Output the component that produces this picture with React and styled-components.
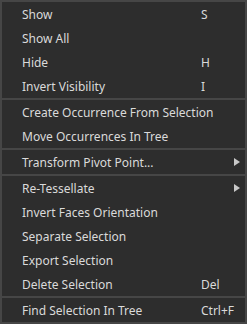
import React from 'react';
import styled, { createGlobalStyle } from 'styled-components';

const GlobalStyle = createGlobalStyle`
  html, body {
    margin: 0;
    padding: 0;
    background: #2b2b2b;
  }
`;

const Menu = styled.div`
  width: 247px;
  height: 324px;
  box-sizing: border-box;
  border: 2px solid #464646;
  background-color: #2d2d2d;
  display: flex;
  flex-direction: column;
  font-family: "Noto Sans", "Open Sans", sans-serif;
  font-size: 12px;
  color: #dadada;
`;

const Item = styled.div`
  height: 24px;
  display: flex;
  align-items: center;
  padding-left: 20px;
  padding-right: 5px;
  white-space: nowrap;
`;

const Label = styled.span`
  flex: 1;
`;

const Shortcut = styled.span`
  width: 39px;
`;

const Separator = styled.div`
  height: 2px;
  background-color: #464646;
`;

const Arrow = styled.span`
  width: 0;
  height: 0;
  border-top: 4.5px solid transparent;
  border-bottom: 4.5px solid transparent;
  border-left: 6px solid #c8c8c8;
`;

const groups = [
  [
    { label: 'Show', key: 'S' },
    { label: 'Show All' },
    { label: 'Hide', key: 'H' },
    { label: 'Invert Visibility', key: 'I' },
  ],
  [
    { label: 'Create Occurrence From Selection' },
    { label: 'Move Occurrences In Tree' },
  ],
  [{ label: 'Transform Pivot Point...', sub: true }],
  [
    { label: 'Re-Tessellate', sub: true },
    { label: 'Invert Faces Orientation' },
    { label: 'Separate Selection' },
    { label: 'Export Selection' },
    { label: 'Delete Selection', key: 'Del' },
  ],
  [{ label: 'Find Selection In Tree', key: 'Ctrl+F' }],
];

export default function App() {
  return (
    <>
      <GlobalStyle />
      <Menu>
        {groups.map((group, gi) => (
          <React.Fragment key={gi}>
            {gi > 0 && <Separator />}
            {group.map((item) => (
              <Item key={item.label}>
                <Label>{item.label}</Label>
                {item.sub ? <Arrow /> : <Shortcut>{item.key}</Shortcut>}
              </Item>
            ))}
          </React.Fragment>
        ))}
      </Menu>
    </>
  );
}
